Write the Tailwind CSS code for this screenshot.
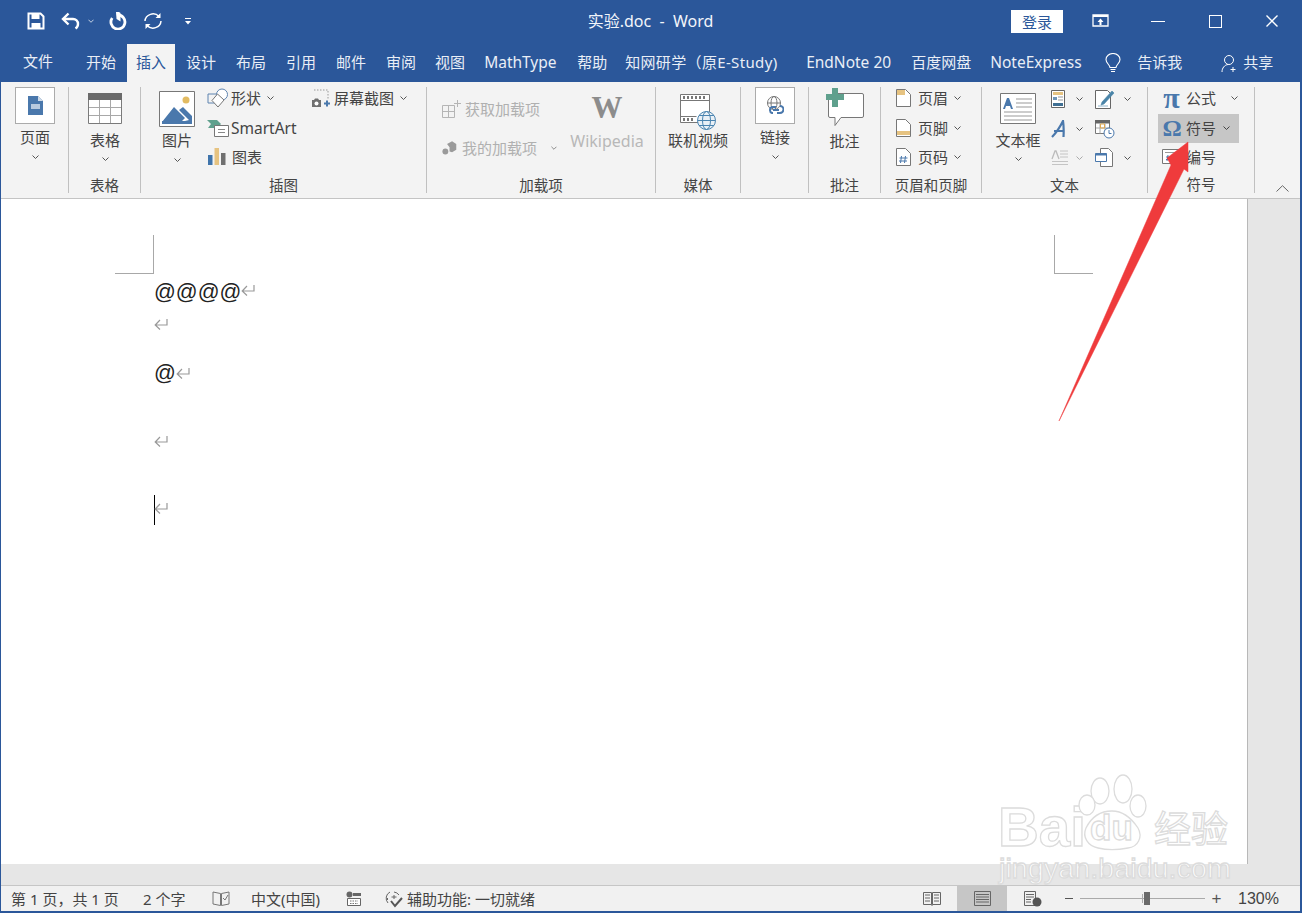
<!DOCTYPE html>
<html lang="zh-CN">
<head>
  <meta charset="UTF-8" />
  <title>实验.doc - Word</title>
  <script src="https://cdn.jsdelivr.net/npm/@tailwindcss/browser@4"></script>
</head>
<body class="bg-white overflow-hidden font-['Noto_Sans','Noto_Sans_CJK_SC',sans-serif] text-[15px] leading-[18px] text-[#444]">
  <svg class="hidden">
    <symbol id="chev" viewBox="0 0 7 4"><path d="M.5.5 3.5 3.5 6.5.5" fill="none" stroke="currentColor" stroke-width="1"/></symbol>
    <symbol id="ret" viewBox="0 0 14 12"><path d="M13 1v6H1.5M6 2 1.2 7 6 11.5" fill="none" stroke="#999" stroke-width="1.2"/></symbol>
  </svg>

  <div class="relative w-[1302px] h-[913px] flex flex-col border-l border-r-2 border-b-2 border-[#2b579a]">

    <!-- title bar -->
    <header class="h-[42px] bg-[#2b579a] text-white grid grid-cols-[1fr_auto_1fr] items-center">
      <div class="flex items-center pl-[26px]">
        <svg class="w-[18px] h-[18px]" viewBox="0 0 18 18"><path d="M1.5 1.5h12l3 3v12h-15z" fill="none" stroke="#fff" stroke-width="2"/><path d="M4.5 2h8v5h-8zM4.5 11h9v5h-9z" fill="#fff"/></svg>
        <svg class="w-[20px] h-[18px] ml-[16px]" viewBox="0 0 20 18"><path d="M3 7h9a5 5 0 0 1 5 5c0 2-1 3.500-2.500 4.500" fill="none" stroke="#fff" stroke-width="2.400"/><path d="M7.500 1.500 2 7l5.500 5.500" fill="none" stroke="#fff" stroke-width="2.400"/></svg>
        <svg class="w-[6px] h-[4px] ml-[7px] text-[#dfe6f1]"><use href="#chev"/></svg>
        <svg class="w-[18px] h-[18px] ml-[15px]" viewBox="0 0 18 18"><path d="M9 3A7 7 0 1 1 3.200 6" fill="none" stroke="#fff" stroke-width="2.800"/><path d="M7 0h3l1.500 1v8.500L7.500 7z" fill="#fff"/></svg>
        <svg class="w-[20px] h-[18px] ml-[16px]" viewBox="0 0 20 18"><path d="M2 9a8 7.500 0 0 1 14-4.500M18 9a8 7.500 0 0 1-14 4.500" fill="none" stroke="#fff" stroke-width="1.500"/><path d="M17.500 1v5h-5zM2.500 17v-5h5z" fill="#fff"/></svg>
        <svg class="w-[6px] h-[7px] ml-[22px]" viewBox="0 0 6 7"><path d="M0 0h6v1H0zM0 3h6L3 6.500z" fill="#fff"/></svg>
      </div>
      <div class="text-[#f2f5fa] text-[16px] whitespace-pre">实验.doc  -  Word</div>
      <div class="flex items-center justify-end">
        <div class="w-[52px] h-[23px] bg-white text-[#2b579a] text-center leading-[24px] mr-[29px]">登录</div>
        <svg class="w-[17px] h-[14px] mr-[42px]" viewBox="0 0 17 14"><path d="M1 1h15v11H1z" fill="none" stroke="#fff" stroke-width="1.300"/><path d="M1 1h15v2H1zM8.500 4.500 5.500 8h2v3h2V8h2z" fill="#fff"/></svg>
        <div class="w-[14px] h-[1px] bg-white mr-[44px]"></div>
        <div class="w-[13px] h-[13px] border-[1.500px] border-white mr-[44px]"></div>
        <svg class="w-[12px] h-[12px] mr-[22px]" viewBox="0 0 12 12"><path d="M.5.500l11 11M11.500.500l-11 11" stroke="#fff" stroke-width="1.400"/></svg>
      </div>
    </header>

    <!-- tabs -->
    <nav class="h-[40px] bg-[#2b579a] text-[#e9eef6] flex pt-[2px] whitespace-nowrap">
      <span class="ml-[22px] mt-[8px]">文件</span>
      <span class="ml-[33px] mt-[9px]">开始</span>
      <span class="ml-[11px] w-[48px] h-[38px] bg-[#f3f3f3] text-[#2b579a] text-center pt-[9px]">插入</span>
      <span class="ml-[11px] mt-[9px]">设计</span>
      <span class="ml-[20px] mt-[9px]">布局</span>
      <span class="ml-[20px] mt-[9px]">引用</span>
      <span class="ml-[20px] mt-[9px]">邮件</span>
      <span class="ml-[20px] mt-[9px]">审阅</span>
      <span class="ml-[19px] mt-[9px]">视图</span>
      <span class="ml-[19px] mt-[9px] w-[74px] text-[15.500px]">MathType</span>
      <span class="ml-[19px] mt-[9px]">帮助</span>
      <span class="ml-[18px] mt-[9px] w-[153px] tracking-[.35px]">知网研学（原E-Study)</span>
      <span class="ml-[28px] mt-[9px] w-[86px] text-[15.500px]">EndNote 20</span>
      <span class="ml-[19px] mt-[9px]">百度网盘</span>
      <span class="ml-[19px] mt-[9px] w-[92px] text-[15.500px]">NoteExpress</span>
      <svg class="w-[16px] h-[21px] ml-[23px] mt-[9px]" viewBox="0 0 16 21"><path d="M5 14.500C4.500 11.500 1 10 1 6.500a7 6 0 0 1 14 0C15 10 11.500 11.500 11 14.500z" fill="none" stroke="#fff" stroke-width="1.100"/><path d="M5.500 16.500h5M6 18.500h4" stroke="#fff" stroke-width="1.200"/></svg>
      <span class="ml-[16px] mt-[9px]">告诉我</span>
      <svg class="w-[17px] h-[19px] ml-[39px] mt-[10px]" viewBox="0 0 17 19"><circle cx="8" cy="6" r="4.500" fill="none" stroke="#fff"/><path d="M1 18c0-4 2.500-7 6-7.500M12 13v5M9.500 15.500h5" fill="none" stroke="#fff"/></svg>
      <span class="ml-[5px] mt-[9px]">共享</span>
    </nav>

    <!-- ribbon -->
    <section class="h-[117px] bg-[#f3f3f3] border-b border-[#c4c4c4] flex py-[5px] whitespace-nowrap">

      <div class="w-[68px] border-r border-[#c0c0c0] flex flex-col items-start">
        <div class="flex flex-col items-center ml-[14px] w-[40px]">
          <div class="w-[40px] h-[37px] bg-white border border-[#ababab] flex items-center justify-center">
            <svg class="w-[15px] h-[19px]" viewBox="0 0 15 19"><path d="M0 0h10l5 5v14H0z" fill="#4a78ac"/><path d="M10 0l5 5h-5z" fill="#cfdbe8"/><path d="M3 8h9v5H3z" fill="#b9cbdf"/></svg>
          </div>
          <span class="mt-[4px]">页面</span>
          <svg class="w-[7px] h-[4px] mt-[9px] text-[#555]"><use href="#chev"/></svg>
        </div>
      </div>

      <div class="w-[72px] border-r border-[#c0c0c0] flex flex-col">
        <div class="h-[91px] flex flex-col items-center pt-[6px] pl-[1px]">
          <svg class="w-[34px] h-[31px]" viewBox="0 0 34 31"><path d="M.5.500h33v30H.5z" fill="#fff" stroke="#7a7a7a"/><path d="M0 0h34v7H0z" fill="#6a6a6a"/><path d="M11.500 7v23M22.500 7v23M1 14.500h32M1 22.500h32" stroke="#a8a8a8"/></svg>
          <span class="mt-[7px]">表格</span>
          <svg class="w-[7px] h-[4px] mt-[8px] text-[#555]"><use href="#chev"/></svg>
        </div>
        <span class="text-center text-[14.500px] leading-[15px]">表格</span>
      </div>

      <div class="w-[286px] border-r border-[#c0c0c0] flex flex-col">
        <div class="h-[91px] flex">
          <div class="flex flex-col items-center w-[36px] ml-[18px] pt-[4px]">
            <svg class="w-[36px] h-[36px]" viewBox="0 0 36 36"><path d="M.5.500h35v35H.5z" fill="#fff" stroke="#777"/><circle cx="27" cy="9" r="3.500" fill="#e2bb62"/><path d="M3 31 15 16l11 11 -4 4zM22 31h11v-6l-9-9-4 3 10 10z" fill="#4a78ac"/><path d="M3 33h30v-3H3z" fill="#4a78ac"/></svg>
            <span class="mt-[4px]">图片</span>
            <svg class="w-[7px] h-[4px] mt-[9px] text-[#555]"><use href="#chev"/></svg>
          </div>
          <div class="flex flex-col ml-[12px] w-[104px] -mt-[2px]">
            <div class="h-[26px] flex items-center">
              <svg class="w-[22px] h-[20px]" viewBox="0 0 22 20"><path d="M1 6h10v9H1z" fill="none" stroke="#5e84b0"/><circle cx="15" cy="6.500" r="5.500" fill="#fff" stroke="#5e84b0"/><path d="M10.500 6 17 12l-6 7-6-6.500z" fill="#fff" stroke="#777"/></svg>
              <span class="ml-[2px]">形状</span>
              <svg class="w-[7px] h-[4px] ml-[6px] text-[#555]"><use href="#chev"/></svg>
            </div>
            <div class="h-[29px] flex items-center mt-[2px]">
              <svg class="w-[22px] h-[18px]" viewBox="0 0 22 18"><path d="M0 1h10l4 4-4 4H1l3-4z" fill="#5fa08d"/><path d="M7.500 6.500h14v11h-14z" fill="#fff" stroke="#777"/><path d="M11 10.500h7M11 13.500h7" stroke="#888"/></svg>
              <span class="ml-[2px] text-[15.500px]">SmartArt</span>
            </div>
            <div class="h-[29px] flex items-center">
              <svg class="w-[18px] h-[17px] ml-[1px]" viewBox="0 0 18 17"><path d="M0 7h4.500v10H0z" fill="#3f74ab"/><path d="M6.500 0H11v17H6.500z" fill="#e6c381"/><path d="M13 5h4.500v12H13z" fill="#707070"/></svg>
              <span class="ml-[6px]">图表</span>
            </div>
          </div>
          <div class="flex h-[26px] items-center -mt-[2px]">
            <svg class="w-[20px] h-[19px]" viewBox="0 0 20 19"><path d="M3 1h14v10" fill="none" stroke="#999" stroke-dasharray="1.500 1.500"/><path d="M1 11h2l1-1.500h3L8 11h2v7H1z" fill="#707070"/><circle cx="5.500" cy="14.500" r="2" fill="#fff"/><path d="M13 14.500h6M16 11.500v6" stroke="#4a78ac" stroke-width="2"/></svg>
            <span class="ml-[3px]">屏幕截图</span>
            <svg class="w-[7px] h-[4px] ml-[6px] text-[#555]"><use href="#chev"/></svg>
          </div>
        </div>
        <span class="text-center text-[14.500px] leading-[15px]">插图</span>
      </div>

      <div class="w-[229px] border-r border-[#c0c0c0] flex flex-col">
        <div class="h-[91px] flex">
          <div class="flex flex-col w-[130px] pl-[15px] text-[#b0b0b0] pt-[12px]">
            <div class="h-[20px] flex items-center">
              <svg class="w-[19px] h-[18px]" viewBox="0 0 19 18"><path d="M.5 5.500h12v12H.5zM.5 11.500h12M6.500 5.500v12M15.500 0v7M12 3.500h7" fill="none" stroke="#b5b5b5"/></svg>
              <span class="ml-[4px]">获取加载项</span>
            </div>
            <div class="h-[20px] flex items-center mt-[19px]">
              <svg class="w-[18px] h-[17px]" viewBox="0 0 18 17"><path d="M6 3 12 0l5 3v7l-5 3-3-1V7z" fill="#9a9a9a"/><circle cx="4" cy="12" r="3.500" fill="#9a9a9a"/></svg>
              <span class="ml-[5px]">我的加载项</span>
              <svg class="w-[7px] h-[4px] ml-[14px] text-[#777]"><use href="#chev"/></svg>
            </div>
          </div>
          <div class="flex flex-col items-center w-[72px] ml-[14px] pt-[3px]">
            <span class="font-['Liberation_Serif',serif] font-bold text-[#8c8c8c] text-[31px] leading-[36px]">W</span>
            <span class="mt-[5px] text-[#b8b8b8] text-[16px] leading-[20px]">Wikipedia</span>
          </div>
        </div>
        <span class="text-center text-[14.500px] leading-[15px]">加载项</span>
      </div>

      <div class="w-[85px] border-r border-[#c0c0c0] flex flex-col">
        <div class="h-[91px] flex flex-col items-center pt-[7px]">
          <svg class="w-[36px] h-[36px]" viewBox="0 0 36 36"><path d="M.5.500h29v28H.5z" fill="#fff" stroke="#777"/><path d="M.5 6.500h29M.5 22.500h16" stroke="#777"/><path d="M3 2h2v3H3zM7 2h2v3H7zM11 2h2v3h-2zM15 2h2v3h-2zM19 2h2v3h-2zM23 2h2v3h-2zM3 24h2v3H3zM7 24h2v3H7zM11 24h2v3h-2z" fill="#777"/><circle cx="26.500" cy="26.500" r="9" fill="#e9f0f6" stroke="#4a84b0"/><ellipse cx="26.500" cy="26.500" rx="4" ry="9" fill="none" stroke="#4a84b0"/><path d="M17.500 26.500h18M19 21.500h15M19 31.500h15" stroke="#4a84b0"/></svg>
          <span class="mt-[1px]">联机视频</span>
        </div>
        <span class="text-center text-[14.500px] leading-[15px]">媒体</span>
      </div>

      <div class="w-[68px] border-r border-[#c0c0c0] flex flex-col items-start">
        <div class="flex flex-col items-center ml-[14px] w-[40px]">
          <div class="w-[40px] h-[37px] bg-white border border-[#ababab] flex items-center justify-center">
            <svg class="w-[18px] h-[20px]" viewBox="0 0 18 20"><circle cx="8" cy="7" r="6.500" fill="#fff" stroke="#777"/><ellipse cx="8" cy="7" rx="3" ry="6.500" fill="none" stroke="#777"/><path d="M1.500 7h13" stroke="#777"/><path d="M4 14a3 3 0 0 1 3-3h3M14 10a3 3 0 0 1 0 7h-3M7 17H6a3 3 0 0 1-2-3M7 14h6" fill="none" stroke="#4a78ac" stroke-width="2"/></svg>
          </div>
          <span class="mt-[4px]">链接</span>
          <svg class="w-[7px] h-[4px] mt-[9px] text-[#555]"><use href="#chev"/></svg>
        </div>
      </div>

      <div class="w-[72px] border-r border-[#c0c0c0] flex flex-col">
        <div class="h-[91px] flex flex-col items-center pt-[1px]">
          <svg class="w-[38px] h-[38px]" viewBox="0 0 38 38"><path d="M8 5.500h28a1.500 1.500 0 0 1 1.500 1.500v21a1.500 1.500 0 0 1-1.500 1.500H15l-6 8v-8H4a1.500 1.500 0 0 1-1.500-1.500V12" fill="#fff" stroke="#777"/><path d="M6 0h6v6h6v6h-6v7H6v-7H0V6h6z" fill="#5fa08d"/></svg>
          <span class="mt-[6px]">批注</span>
        </div>
        <span class="text-center text-[14.500px] leading-[15px]">批注</span>
      </div>

      <div class="w-[101px] border-r border-[#c0c0c0] flex flex-col">
        <div class="h-[91px] flex flex-col pl-[15px]">
          <div class="h-[26px] flex items-center -mt-[2px]">
            <svg class="w-[15px] h-[18px]" viewBox="0 0 15 18"><path d="M.5.500h9l5 5v12H.500z" fill="#fff" stroke="#777"/><path d="M1 1h8v5H1z" fill="#e6c381"/></svg>
            <span class="ml-[7px]">页眉</span>
            <svg class="w-[7px] h-[4px] ml-[6px] text-[#555]"><use href="#chev"/></svg>
          </div>
          <div class="h-[29px] flex items-center mt-[2px]">
            <svg class="w-[15px] h-[18px]" viewBox="0 0 15 18"><path d="M.5.500h9l5 5v12H.500z" fill="#fff" stroke="#777"/><path d="M1 12h13v4H1z" fill="#e6c381"/></svg>
            <span class="ml-[7px]">页脚</span>
            <svg class="w-[7px] h-[4px] ml-[6px] text-[#555]"><use href="#chev"/></svg>
          </div>
          <div class="h-[29px] flex items-center">
            <svg class="w-[15px] h-[18px]" viewBox="0 0 15 18"><path d="M.5.500h9l5 5v12H.500z" fill="#fff" stroke="#777"/><path d="M5.500 8 4.500 15M9.500 8l-1 7M3.500 10h8M3 13h8" stroke="#4a78ac"/></svg>
            <span class="ml-[7px]">页码</span>
            <svg class="w-[7px] h-[4px] ml-[6px] text-[#555]"><use href="#chev"/></svg>
          </div>
        </div>
        <span class="text-center text-[14.500px] leading-[15px]">页眉和页脚</span>
      </div>

      <div class="w-[166px] border-r border-[#c0c0c0] flex flex-col">
        <div class="h-[91px] flex">
          <div class="flex flex-col items-center w-[46px] ml-[13px] pt-[6px]">
            <svg class="w-[36px] h-[31px]" viewBox="0 0 36 31"><path d="M.5.500h35v30H.5z" fill="#fff" stroke="#777"/><path d="M3 16 7 5h2l4 11h-2l-1-3H6l-1 3z" fill="#4a78ac"/><path d="M16 6h16M16 10h16M16 14h16M4 19h28M4 23h28M4 27h28" stroke="#999"/></svg>
            <span class="mt-[7px]">文本框</span>
            <svg class="w-[7px] h-[4px] mt-[8px] text-[#555]"><use href="#chev"/></svg>
          </div>
          <div class="flex flex-col w-[44px] ml-[10px] -mt-[1px]">
            <div class="h-[26px] flex items-center">
              <svg class="w-[14px] h-[18px]" viewBox="0 0 14 18"><path d="M.5.500h13v17H.5z" fill="#fff" stroke="#666"/><path d="M2 2h10v3H2z" fill="#e6c381"/><path d="M2 7h4v3H2z" fill="#6f95b8"/><path d="M7 7h5M7 10h5" stroke="#999"/><path d="M2 13h10v3H2z" fill="#3f6f93"/></svg>
              <svg class="w-[7px] h-[4px] ml-[11px] text-[#555]"><use href="#chev"/></svg>
            </div>
            <div class="h-[29px] flex items-center mt-[2px]">
              <svg class="w-[14px] h-[18px]" viewBox="0 0 14 18"><path d="M1 17C5 13 9 7 12 1c.8 5 .8 11 .5 16M3 11h9.500" fill="none" stroke="#4a78ac" stroke-width="2.200"/></svg>
              <svg class="w-[7px] h-[4px] ml-[11px] text-[#555]"><use href="#chev"/></svg>
            </div>
            <div class="h-[29px] flex items-center">
              <svg class="w-[18px] h-[18px]" viewBox="0 0 18 18"><path d="M1 10 4 2h1l3 8" fill="none" stroke="#bbb" stroke-width="1.300"/><path d="M9 2h8M9 5h8M9 8h8M1 12.500h16M1 15.500h16" stroke="#c4c4c4"/></svg>
              <svg class="w-[7px] h-[4px] ml-[7px] text-[#aaa]"><use href="#chev"/></svg>
            </div>
          </div>
          <div class="flex flex-col -mt-[1px]">
            <div class="h-[26px] flex items-center">
              <svg class="w-[20px] h-[20px]" viewBox="0 0 20 20"><path d="M.5 1.500h12l3 3v15H.5z" fill="#fff" stroke="#666"/><path d="M7 13 17 2l2 2L9 15l-3 1zM3 17h10" fill="#4a84a8" stroke="#4a84a8" stroke-width=".6"/></svg>
              <svg class="w-[7px] h-[4px] ml-[9px] text-[#555]"><use href="#chev"/></svg>
            </div>
            <div class="h-[29px] flex items-center mt-[2px]">
              <svg class="w-[20px] h-[20px]" viewBox="0 0 20 20"><path d="M.5 1.500h14v13H.5z" fill="#fff" stroke="#777"/><path d="M0 1h15v3.500H0z" fill="#666"/><path d="M5 4.500v10M10 4.500v10M1 9h13" stroke="#aaa"/><path d="M5.500 5h4v4h-4z" fill="none" stroke="#e0a84f"/><circle cx="14" cy="14" r="5" fill="#fff" stroke="#4a78ac"/><path d="M14 11v3.500h2.500" fill="none" stroke="#4a78ac"/></svg>
            </div>
            <div class="h-[29px] flex items-center">
              <svg class="w-[18px] h-[19px]" viewBox="0 0 18 19"><path d="M5.500.500h8l4 4v14h-12z" fill="#fff" stroke="#777"/><path d="M.500 5.500h11v8H.500z" fill="#fff" stroke="#4a78ac"/><path d="M.500 5.500h11v2H.500z" fill="#4a78ac"/></svg>
              <svg class="w-[7px] h-[4px] ml-[11px] text-[#555]"><use href="#chev"/></svg>
            </div>
          </div>
        </div>
        <span class="text-center text-[14.500px] leading-[15px]">文本</span>
      </div>

      <div class="w-[107px] border-r border-[#c0c0c0] flex flex-col">
        <div class="h-[91px] flex flex-col pl-[10px] -mt-[1px]">
          <div class="h-[26px] flex items-center pl-[4px] pb-[2px]">
            <span class="w-[19px] text-center font-['Liberation_Serif',serif] font-bold text-[#4a78ac] text-[30px] leading-[24px]">π</span>
            <span class="ml-[5px]">公式</span>
            <svg class="w-[7px] h-[4px] ml-[15px] text-[#555]"><use href="#chev"/></svg>
          </div>
          <div class="h-[29px] w-[81px] flex items-center pl-[4px] pb-[2px] mt-[2px] bg-[#c6c6c6]">
            <span class="w-[20px] text-center font-['Liberation_Serif',serif] font-bold text-[#4a78ac] text-[24px] leading-[24px]">Ω</span>
            <span class="ml-[4px]">符号</span>
            <svg class="w-[7px] h-[4px] ml-[7px] text-[#444]"><use href="#chev"/></svg>
          </div>
          <div class="h-[29px] flex items-center pl-[4px] pb-[2px]">
            <svg class="w-[19px] h-[15px]" viewBox="0 0 19 15"><path d="M.5.500h18v14H.5z" fill="#fff" stroke="#777"/><path d="M3 3.500h13" stroke="#999"/><path d="M6 6 5 12M10 6 9 12M4 8h7M4 10.500h7" stroke="#4a78ac"/></svg>
            <span class="ml-[5px]">编号</span>
          </div>
        </div>
        <span class="text-center text-[14.500px] leading-[15px]">符号</span>
      </div>

      <div class="flex-1 flex items-end justify-end pr-[11px] pb-[1px]">
        <svg class="w-[13px] h-[7px]" viewBox="0 0 13 7"><path d="M.5 6.500 6.500.700l6 5.800" fill="none" stroke="#666"/></svg>
      </div>
    </section>

    <!-- document -->
    <main class="flex-1 bg-[#e6e6e6] flex flex-col">
      <div class="h-[665px] flex">
        <div class="w-[1247px] bg-white border-r border-[#b8b8b8] pt-[36px] pl-[114px] pr-[154px]">
          <div class="flex justify-between">
            <div class="w-[39px] h-[39px] border-r border-b border-[#a8a8a8]"></div>
            <div class="w-[39px] h-[39px] border-l border-b border-[#a8a8a8]"></div>
          </div>
          <div class="pl-[39px] mt-[2px] font-['Liberation_Sans',sans-serif] text-[21.500px] text-[#222]">
            <div class="h-[32px] flex items-center">@@@@<svg class="w-[14px] h-[12px] mb-[5px]"><use href="#ret"/></svg></div>
            <div class="h-[32px] flex items-center"><svg class="w-[14px] h-[12px]"><use href="#ret"/></svg></div>
            <div class="h-[32px] mt-[17px] flex items-center">@<svg class="w-[14px] h-[12px]"><use href="#ret"/></svg></div>
            <div class="h-[32px] mt-[36px] flex items-center"><svg class="w-[14px] h-[12px]"><use href="#ret"/></svg></div>
            <div class="h-[32px] mt-[35px] flex items-center">
              <div class="w-[1px] h-[30px] mt-[4px] bg-black -mr-[1px]"></div>
              <svg class="w-[14px] h-[12px]"><use href="#ret"/></svg>
            </div>
          </div>
        </div>
      </div>
    </main>

    <!-- status bar -->
    <footer class="h-[26px] bg-[#f1f1f1] border-t border-[#c6c6c6] flex items-center text-[15px] text-[#444] whitespace-nowrap">
      <span class="ml-[10px] w-[109px]">第 1 页，共 1 页</span>
      <span class="ml-[23px] w-[44px]">2 个字</span>
      <svg class="w-[18px] h-[15px] ml-[25px]" viewBox="0 0 18 15"><path d="M8.500 2.500 1 1v12l7.500 1.500zM9.500 2.500 17 1v12l-7.500 1.500z" fill="none" stroke="#777"/><path d="M11 7l2 2 3-5" fill="none" stroke="#777"/></svg>
      <span class="ml-[21px] w-[70px]">中文(中国)</span>
      <svg class="w-[16px] h-[16px] ml-[25px]" viewBox="0 0 16 16"><circle cx="3.500" cy="3.500" r="3" fill="#666"/><path d="M7 2h8v3H7z" fill="#666"/><path d="M1.500 7.500h13v7h-13z" fill="#fff" stroke="#666"/><path d="M4 10h8M4 12.500h8" stroke="#777" stroke-dasharray="1.500 1"/></svg>
      <svg class="w-[19px] h-[18px] ml-[23px]" viewBox="0 0 19 18"><path d="M5 2A7 7 0 0 0 3 13" fill="none" stroke="#666"/><path d="M9 2a7 7 0 0 1 5 3" fill="none" stroke="#666"/><path d="M2.500 8v2M9 5v4M6.500 7h5" stroke="#666"/><path d="M6 11l4 5 7-8" fill="none" stroke="#555" stroke-width="2"/></svg>
      <span class="ml-[3px] w-[128px]">辅助功能: 一切就绪</span>
      <svg class="w-[18px] h-[15px] ml-[388px]" viewBox="0 0 18 15"><path d="M.5 1.500h8v12h-8zM9.500 1.500h8v12h-8zM2 4h5M2 7h5M2 10h5M11 4h5M11 7h5M11 10h5M9 13v2" fill="none" stroke="#666"/></svg>
      <div class="w-[50px] h-full bg-[#c6c6c6] ml-[16px] flex items-center justify-center">
        <svg class="w-[17px] h-[15px]" viewBox="0 0 17 15"><path d="M.5.500h16v14H.5zM2 3.500h13M2 6h13M2 8.500h13M2 11h13" fill="none" stroke="#666"/></svg>
      </div>
      <svg class="w-[18px] h-[16px] ml-[17px]" viewBox="0 0 18 16"><path d="M.5.500h11v14H.5zM2 3.500h8M2 6h8M2 8.500h5M2 11h5" fill="none" stroke="#666"/><circle cx="13" cy="11" r="4.500" fill="#555"/></svg>
      <div class="w-[8px] h-[1px] bg-[#555] ml-[23px]"></div>
      <div class="w-[125px] h-[1px] bg-[#aaa] ml-[7px] flex items-center relative">
        <div class="w-[1px] h-[9px] bg-[#aaa] ml-[62px]"></div>
        <div class="w-[6px] h-[13px] bg-[#6a6a6a] ml-[1px]"></div>
      </div>
      <span class="ml-[6px] w-[11px] h-[11px] flex items-center justify-center text-[#555] text-[17px] leading-[11px] font-['Liberation_Sans',sans-serif]">+</span>
      <span class="ml-[16px] font-['Liberation_Sans',sans-serif] text-[16px]">130%</span>
    </footer>

    <!-- red arrow and watermark, both sit over the window -->
    <svg class="absolute -left-px top-0 w-[1302px] h-[913px] pointer-events-none font-['Liberation_Sans',sans-serif]" viewBox="0 0 1302 913">
      <polygon points="1059,421 1171,165 1167,158 1188,142 1188,172 1184,169" fill="#ef3b3c" stroke="#ef3b3c" stroke-width=".5"/>
      <g fill="#fff" stroke="#dcdcdc" stroke-width="1.300">
        <text x="998" y="846" font-size="56" font-weight="700" textLength="88" lengthAdjust="spacingAndGlyphs">Bai</text>
        <text x="1090" y="840" font-size="35" font-weight="700">du</text>
        <text x="1154" y="843" font-size="37" font-family="Noto Sans CJK SC">经验</text>
        <text x="999" y="878" font-size="27" textLength="232" lengthAdjust="spacingAndGlyphs">jingyan.baidu.com</text>
        <ellipse cx="1100" cy="791" rx="9" ry="13"/>
        <ellipse cx="1123" cy="789" rx="9" ry="14"/>
        <ellipse cx="1138" cy="806" rx="8" ry="11"/>
        <ellipse cx="1087" cy="805" rx="8" ry="10"/>
        <path d="M1086 828c6-12 14-17 26-17s20 8 26 17c5 9 0 19-10 20-10 2-22 2-30 0-10-2-16-11-12-20z" fill="none"/>
      </g>
    </svg>
  </div>
</body>
</html>
